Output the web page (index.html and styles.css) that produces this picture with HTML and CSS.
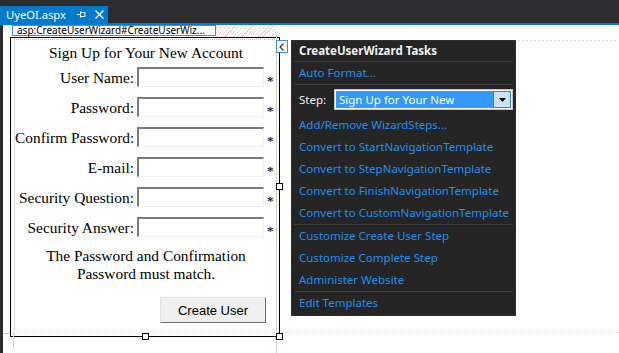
FILE: index.html
```html
<!DOCTYPE html>
<html lang="en">
<head>
    <meta charset="UTF-8">
    <title>UyeOI.aspx - Design</title>
    <link rel="stylesheet" href="styles.css">
</head>
<body>
    <div class="titlebar">
        <div class="tab">
            <span class="tab-name">UyeOI.aspx</span>
            <svg class="tab-pin" width="9" height="9" viewBox="0 0 9 9">
                <path d="M0 4.5h3M3.5 1.5v6M3.5 2.5h4.5v4h-4.5" fill="none" stroke="#fff" stroke-width="1"/>
            </svg>
            <svg class="tab-close" width="9" height="9" viewBox="0 0 9 9">
                <path d="M0.5 0.5l8 8M8.5 0.5l-8 8" stroke="#fff" stroke-width="1.4"/>
            </svg>
        </div>
    </div>
    <div class="accent"></div>

    <div class="workspace">
        <div class="tag-row">
            <div class="tag-name">asp:CreateUserWizard#CreateUserWiz...</div>
            <div class="tag-hatch"></div>
        </div>

        <div class="control">
            <div class="wizard">
                <h1 class="wizard-title">Sign Up for Your New Account</h1>

                <div class="field">
                    <label>User Name:</label>
                    <span class="textbox"></span>
                    <span class="required">*</span>
                </div>
                <div class="field">
                    <label>Password:</label>
                    <span class="textbox"></span>
                    <span class="required">*</span>
                </div>
                <div class="field">
                    <label>Confirm Password:</label>
                    <span class="textbox"></span>
                    <span class="required">*</span>
                </div>
                <div class="field">
                    <label>E-mail:</label>
                    <span class="textbox"></span>
                    <span class="required">*</span>
                </div>
                <div class="field">
                    <label>Security Question:</label>
                    <span class="textbox"></span>
                    <span class="required">*</span>
                </div>
                <div class="field">
                    <label>Security Answer:</label>
                    <span class="textbox"></span>
                    <span class="required">*</span>
                </div>

                <p class="compare-error">The Password and Confirmation<br>Password must match.</p>

                <div class="actions">
                    <button class="create-btn" type="button">Create User</button>
                </div>
            </div>
        </div>

        <!-- designer guides -->
        <div class="guide guide-top"></div>
        <div class="guide guide-bottom"></div>
        <div class="guide-pink pink-right"></div>
        <div class="guide-pink pink-left"></div>
        <div class="guide-pink pink-foot"></div>

        <span class="handle handle-bottom"></span>
        <span class="handle handle-side"></span>
        <span class="handle handle-corner"></span>

        <button class="smart-tag" type="button">
            <svg width="6" height="8" viewBox="0 0 6 8"><path d="M4.5 0.5l-3.5 3.5 3.5 3.5" fill="none" stroke="#333" stroke-width="1.2"/></svg>
        </button>

        <div class="tasks">
            <div class="tasks-title">CreateUserWizard Tasks</div>
            <div class="tasks-sep"></div>
            <a class="task-link">Auto Format...</a>
            <div class="tasks-sep"></div>
            <div class="step-row">
                <span class="step-label">Step:</span>
                <div class="step-select">
                    <span class="step-value">Sign Up for Your New</span>
                    <span class="step-arrow">
                        <svg width="7" height="4" viewBox="0 0 7 4"><path d="M0 0h7l-3.5 4z" fill="#000"/></svg>
                    </span>
                </div>
            </div>
            <a class="task-link">Add/Remove WizardSteps...</a>
            <a class="task-link">Convert to StartNavigationTemplate</a>
            <a class="task-link">Convert to StepNavigationTemplate</a>
            <a class="task-link">Convert to FinishNavigationTemplate</a>
            <a class="task-link">Convert to CustomNavigationTemplate</a>
            <div class="tasks-sep"></div>
            <a class="task-link">Customize Create User Step</a>
            <a class="task-link">Customize Complete Step</a>
            <a class="task-link">Administer Website</a>
            <div class="tasks-sep"></div>
            <a class="task-link">Edit Templates</a>
        </div>
    </div>
</body>
</html>
```

FILE: styles.css
```css
:root {
    --chrome: #2d2d30;
    --accent: #007acc;
    --panel: #252526;
    --panel-line: #3a3a3e;
    --link: #1c8ff0;
    --guide-pink: #e2cccc;
}

* {
    margin: 0;
    padding: 0;
    box-sizing: border-box;
}

body {
    width: 619px;
    height: 353px;
    overflow: hidden;
    background: #fff;
    font-family: "Noto Sans", "Open Sans", sans-serif;
}

/* document tab strip */
.titlebar {
    height: 23px;
    background: var(--chrome);
    display: flex;
    align-items: flex-end;
}

.tab {
    width: 108px;
    height: 17px;
    background: var(--accent);
    color: #fff;
    display: flex;
    align-items: center;
    padding-left: 6px;
    font-size: 11.2px;
}

.tab-name {
    width: 71px;
}

.tab-close {
    margin-left: 9px;
}

.accent {
    height: 2px;
    background: var(--accent);
}

/* design surface */
.workspace {
    position: relative;
    height: 328px;
    border-left: 3px solid var(--chrome);
}

.tag-row {
    display: flex;
    margin-left: 9px;
    height: 12px;
}

.tag-name {
    height: 11px;
    width: 204px;
    border: 1px solid #3b8ee4;
    background: #fff;
    font-size: 10px;
    line-height: 9px;
    padding-left: 4px;
    color: #000;
    white-space: nowrap;
}

.tag-hatch {
    width: 61px;
    height: 12px;
    background: repeating-linear-gradient(135deg, #fff 0 2px, #ecd2d2 2px 3px);
}

.control {
    margin-left: 7px;
    width: 270px;
    height: 300px;
    border: 1px solid #000;
}

.wizard {
    margin: 1px 2px 0 3px;
    height: 296px;
    border-top: 1px dotted #c4c4c4;
    border-left: 1px dotted #c4c4c4;
    font-family: "Liberation Serif", "Times New Roman", serif;
    font-size: 15.4px;
    line-height: 18px;
    color: #000;
}

.wizard-title {
    font-size: 15.4px;
    font-weight: normal;
    text-align: center;
    padding-top: 4px;
    margin-bottom: 5px;
}

.field {
    display: grid;
    grid-template-columns: 119px 127px 10px;
    column-gap: 3px;
    height: 30px;
}

.field label {
    text-align: right;
    padding-top: 2px;
    white-space: nowrap;
}

.textbox {
    height: 20px;
    border-top: 2px solid #7a7a7a;
    border-left: 2px solid #7a7a7a;
    border-right: 1px solid #f0f0f0;
    border-bottom: 1px solid #f0f0f0;
    background: #fff;
}

.required {
    font-size: 13px;
    font-weight: bold;
    line-height: 13px;
    padding-top: 7px;
    color: #222;
}

.compare-error {
    text-align: center;
}

.actions {
    display: flex;
    justify-content: flex-end;
    padding-right: 11px;
    margin-top: 14px;
}

.create-btn {
    width: 106px;
    height: 26px;
    background: #efefef;
    border: 1px solid;
    border-color: #e3e3e3 #707070 #707070 #e3e3e3;
    font-family: "Liberation Sans", Arial, sans-serif;
    font-size: 13px;
    color: #000;
}

/* designer guides and handles */
.guide {
    position: absolute;
    height: 1px;
    background: repeating-linear-gradient(90deg, #c6c6c6 0 1px, transparent 1px 4px);
}

.guide-top {
    top: 15px;
    left: 512px;
    right: 0;
}

.guide-bottom {
    top: 307px;
    left: 11px;
    right: 0;
}

.guide-pink {
    position: absolute;
    background: var(--guide-pink);
}

.pink-right {
    left: 273px;
    top: 12px;
    width: 1px;
    bottom: 0;
}

.pink-left {
    left: 10px;
    top: 308px;
    width: 1px;
    height: 15px;
}

.pink-foot {
    left: 0;
    top: 308px;
    width: 7px;
    height: 1px;
}

.handle {
    position: absolute;
    width: 7px;
    height: 7px;
    background: #fff;
    border: 1px solid #000;
}

.handle-bottom {
    left: 139px;
    top: 308px;
}

.handle-side {
    left: 273px;
    top: 158px;
}

.handle-corner {
    left: 273px;
    top: 308px;
}

.smart-tag {
    position: absolute;
    left: 273px;
    top: 15px;
    width: 12px;
    height: 13px;
    background: #fff;
    border: 1px solid #3c8ee6;
    display: flex;
    align-items: center;
    justify-content: center;
}

/* smart tag panel */
.tasks {
    position: absolute;
    left: 288px;
    top: 15px;
    width: 225px;
    height: 276px;
    background: var(--panel);
    border: 1px solid #2f2f33;
    padding: 0 2px;
    font-size: 11.5px;
    display: flex;
    flex-direction: column;
}

.tasks-title {
    height: 20px;
    line-height: 20px;
    padding-left: 5px;
    color: #f1f1f1;
    font-weight: bold;
}

.tasks-sep {
    height: 1px;
    background: var(--panel-line);
}

.task-link {
    height: 22px;
    line-height: 21px;
    padding-left: 5px;
    color: var(--link);
    white-space: nowrap;
}

.step-row {
    height: 29px;
    display: flex;
    align-items: center;
    padding-left: 5px;
    color: #f1f1f1;
}

.step-label {
    width: 35px;
}

.step-select {
    width: 179px;
    height: 21px;
    border: 1px solid #c4c4c4;
    display: flex;
    padding: 1px;
    background: #fff;
}

.step-value {
    flex: 1;
    background: #3399ff;
    color: #fff;
    padding-left: 3px;
    line-height: 17px;
}

.step-arrow {
    width: 18px;
    background: #cde3f8;
    border: 1px solid #2f7fd6;
    display: flex;
    align-items: center;
    justify-content: center;
}
```
